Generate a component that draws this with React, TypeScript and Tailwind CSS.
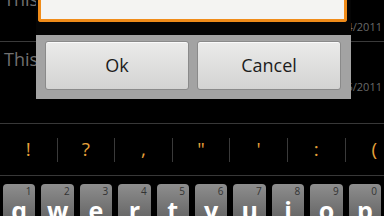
import React from 'react'

const rows = [
  { title: 'This is my first note', date: '03/14/2011' },
  { title: 'This is another note', date: '03/15/2011' },
]

const suggestions = ['!', '?', ',', '"', "'", ':', '(']

const keys = [
  { k: 'q', n: '1' },
  { k: 'w', n: '2' },
  { k: 'e', n: '3' },
  { k: 'r', n: '4' },
  { k: 't', n: '5' },
  { k: 'y', n: '6' },
  { k: 'u', n: '7' },
  { k: 'i', n: '8' },
  { k: 'o', n: '9' },
  { k: 'p', n: '0' },
]

function DialogButton({ label }: { label: string }) {
  return (
    <button
      type="button"
      className="flex-1 h-[49px] rounded-[3px] border border-[#8a8a8a] bg-gradient-to-b from-[#ebebea] to-[#d3d3d2] text-[18px] text-[#1c1c1c] shadow-[inset_0_1px_0_#fafafa]"
    >
      {label}
    </button>
  )
}

export default function App() {
  return (
    <div
      className="w-[384px] h-[216px] overflow-hidden bg-black flex flex-col"
      style={{ fontFamily: '"Open Sans", "Noto Sans", sans-serif' }}
    >
      {/* note list with dialog on top */}
      <div className="relative h-[123px] shrink-0">
        <div className="-mt-[18px] flex flex-col">
          {rows.map((r, i) => (
            <div
              key={i}
              className={`h-[60px] pl-[4px] pr-[2px] pt-[7px] flex flex-col ${i === 0 ? 'border-b border-[#3a3a3a]' : ''}`}
            >
              <span className="text-[18px] leading-[20px] text-[#707070] whitespace-nowrap">{r.title}</span>
              <span className="mt-[11px] self-end text-[11px] leading-[14px] text-[#6a6a6a]">{r.date}</span>
            </div>
          ))}
        </div>

        <div className="absolute left-[36px] top-0 w-[315px] flex flex-col">
          <div className="bg-[#050505] pl-[2px] pr-[4px] pb-[13px]">
            <div className="h-[22px] rounded-b-[3px] border-[3px] border-t-0 border-[#f08c1a] bg-[#f4f4f2]" />
          </div>
          <div className="h-[64px] bg-[#a3a3a3] pt-[6px] pl-[9px] pr-[10px] flex gap-[8px]">
            <DialogButton label="Ok" />
            <DialogButton label="Cancel" />
          </div>
        </div>
      </div>

      {/* keyboard */}
      <div className="flex flex-col">
        <div className="h-[53px] border-y border-[#383838] flex items-center">
          {suggestions.map((s, i) => (
            <div
              key={i}
              className={`w-[57.6px] shrink-0 h-[24px] flex items-center justify-center text-[19px] leading-none text-[#e6a23a] ${i < suggestions.length - 1 ? 'border-r border-[#3a3a3a]' : ''}`}
            >
              {s}
            </div>
          ))}
        </div>
        <div className="mt-[8px] grid grid-cols-10 gap-x-[6px] px-[3px]">
          {keys.map((key) => (
            <div
              key={key.k}
              className="h-[40px] rounded-[4px] bg-gradient-to-b from-[#8e8e8e] to-[#606060] flex flex-col"
            >
              <span className="self-end pr-[4px] pt-[1px] text-[10px] leading-[12px] text-[#333333]">{key.n}</span>
              <span className="text-center text-[25px] leading-[26px] font-bold text-white">{key.k}</span>
            </div>
          ))}
        </div>
      </div>
    </div>
  )
}
